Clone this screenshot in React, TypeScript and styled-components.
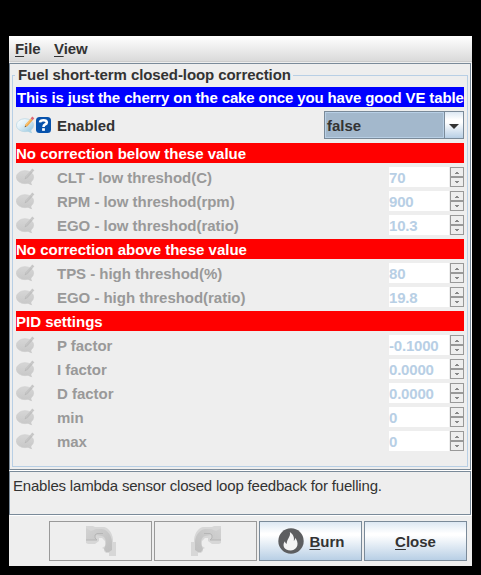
import React from "react";
import styled, { createGlobalStyle } from "styled-components";

const Global = createGlobalStyle`
  html, body { margin: 0; background: #000; }
  * { box-sizing: border-box; }
  body { font: bold 15px/20px "Liberation Sans", Arial, sans-serif; color: #333; overflow: hidden; }
`;

const Desktop = styled.div`
  height: 575px;
  width: 481px;
  padding: 36px 9px 9px;
  background: #000;
`;

const Window = styled.main`
  width: 463px;
  height: 530px;
  background: #eee;
  display: flex;
  flex-direction: column;
`;

const MenuBar = styled.nav`
  height: 27px;
  flex: none;
  display: flex;
  gap: 13px;
  padding: 3px 6px 0;
  background: linear-gradient(#fff, #dadada 25px, #ccc 25px, #ccc 26px, #eee 26px);
`;

const Word = styled.span<{ $width: number }>`
  display: block;
  width: ${(p) => p.$width}px;
  white-space: pre;
  letter-spacing: -0.1px;
`;

const Key = styled.span`
  text-decoration: underline;
  text-decoration-thickness: 1px;
  text-underline-offset: 2px;
  text-decoration-skip-ink: none;
`;

const Pane = styled.section<{ $height: number }>`
  height: ${(p) => p.$height}px;
  flex: none;
  width: 462px;
  border: 1px solid #7a8a99;
  box-shadow: 1px 1px 0 #fff;
`;

const Group = styled.fieldset`
  margin: 1px 5px 0 2px;
  padding: 0 5px 0 3px;
  width: 456px;
  height: 402px;
  border: 1px solid #b8cfe5;
  min-width: 0;
  display: block;
`;

const Legend = styled.legend`
  height: 20px;
  margin-left: -1px;
  padding: 0 2px 0 3px;
  white-space: nowrap;
  letter-spacing: -0.08px;
`;

const Rows = styled.div`
  display: grid;
  grid-template-columns: 448px;
  gap: 4px;
  padding-top: 2px;
`;

const Banner = styled.div<{ $info?: boolean }>`
  height: 20px;
  line-height: 21px;
  white-space: nowrap;
  background: ${(p) => (p.$info ? "#00f" : "#f00")};
  padding-left: ${(p) => (p.$info ? 1 : 0)}px;
  letter-spacing: ${(p) => (p.$info ? -0.12 : 0)}px;
  color: #fff;
`;

const Row = styled.div<{ $off?: boolean }>`
  display: grid;
  grid-template-columns: 41px 1fr auto;
  grid-template-rows: 100%;
  align-items: center;
  height: ${(p) => (p.$off ? 20 : 28)}px;
  color: ${(p) => (p.$off ? "#999" : "#333")};
  white-space: nowrap;
`;

const Label = styled.span`
  height: 20px;
  line-height: 22px;
  letter-spacing: -0.03px;
`;

const Icons = styled.div`
  display: flex;
  gap: 1px;
  align-items: center;
`;

const Combo = styled.div`
  width: 140px;
  height: 28px;
  display: grid;
  grid-template-columns: 1fr 19px;
  grid-template-rows: 26px;
  border: 1px solid #7a8a99;
`;

const ComboValue = styled.div`
  background: #a3b8cc;
  border: 1px solid #b8cfe5;
  padding-left: 1px;
  line-height: 25px;
`;

const ComboArrow = styled.div`
  border-left: 1px solid #7a8a99;
  display: flex;
  align-items: center;
  justify-content: center;
  padding-top: 2px;
  background: linear-gradient(#dde8f3, #fff 30%, #fff 40%, #b8cfe5);
`;

const Spinner = styled.div`
  width: 75px;
  height: 20px;
  display: grid;
  grid-template-columns: 60px 14px;
  column-gap: 1px;
`;

const Value = styled.div`
  height: 20px;
  background: #fff;
  color: #b8cfe5;
  line-height: 22px;
  letter-spacing: -0.2px;
`;

const Steps = styled.div`
  display: grid;
  grid-template-rows: 10px 10px;
`;

const Step = styled.div`
  border: 1px solid #999;
  display: flex;
  align-items: center;
  justify-content: center;
`;

const Hint = styled.p`
  margin: 0;
  padding: 4px 3px;
  font-weight: normal;
  letter-spacing: -0.19px;
  white-space: nowrap;
`;

const Actions = styled.footer`
  display: grid;
  grid-template-columns: repeat(4, 103px);
  gap: 2px;
  padding: 6px 0 0 40px;
`;

const Action = styled.button<{ $off?: boolean }>`
  height: 40px;
  padding: 0;
  font: inherit;
  color: #333;
  display: flex;
  align-items: center;
  justify-content: center;
  gap: 5px;
  border: 1px solid ${(p) => (p.$off ? "#999" : "#7a8a99")};
  background: ${(p) => (p.$off ? "#eee" : "linear-gradient(#dde8f3, #fff 30%, #fff 35%, #b8cfe5)")};
`;

const Caption = styled.span`
  padding-top: 2px;
`;

const Flame = styled.svg`
  margin-left: 2px;
`;

const Divider = styled.div`
  height: 1px;
`;

const NoteIcon = ({ off }: { off?: boolean }) => (
  <svg width="19" height="18" viewBox="0 0 19 18">
    <defs>
      <linearGradient id="bubble" x1="0" y1="0" x2="1" y2="1">
        <stop offset="0" stopColor="#fff" />
        <stop offset="0.4" stopColor="#e3f1f8" />
        <stop offset="1" stopColor="#8fc4de" />
      </linearGradient>
      <linearGradient id="bubbleOff" x1="0" y1="0" x2="0" y2="1">
        <stop offset="0" stopColor="#d6d6d6" />
        <stop offset="1" stopColor="#c8c8c8" />
      </linearGradient>
    </defs>
    <path d="M10 14.500c2 .3 3.500 2.500 6.300 2.800-1-1.200-1.300-2.500-.8-4.300z" fill={off ? "#cacaca" : "#a9d3e6"} />
    <ellipse
      cx="9"
      cy="9.200"
      rx="8.600"
      ry="6.500"
      fill={off ? "url(#bubbleOff)" : "url(#bubble)"}
      stroke={off ? "#cecece" : "#b5d4e2"}
      strokeWidth=".7"
    />
    <path d="M8.700 11.300l.7-2.700 5.300-6 2 1.600-5.300 6z" fill={off ? "#c0c0c0" : "#f2ac50"} />
    <path d="M10 8.900l5-5.700" stroke={off ? "#cacaca" : "#ffd58a"} strokeWidth=".8" />
    <path d="M14.700 2.600L16.200.600l2.100 1.600-1.600 2z" fill={off ? "#c6c6c6" : "#df6673"} />
    <path d="M8.700 11.300l.4-1.600 1.200 1z" fill={off ? "#b8b8b8" : "#555"} />
  </svg>
);

const HelpIcon = () => (
  <svg width="15" height="16" viewBox="0 0 15 16">
    <rect width="15" height="16" rx="3.500" fill="#0752ac" />
    <path d="M4 5.400Q4.300 3.200 7.500 3.200t3.300 2.200Q10.800 6.700 9 7.500 7.500 8.200 7.500 10" fill="none" stroke="#fff" strokeWidth="2.600" />
    <rect x="6.100" y="11.200" width="2.800" height="2.600" fill="#fff" />
  </svg>
);

const StepIcon = ({ down }: { down?: boolean }) => (
  <svg width="4" height="3" viewBox="0 0 4 3" shapeRendering="crispEdges">
    <path d={down ? "M0 0h4v1H3v1H1V1H0z" : "M1 1h2v1h1v1H0V2h1z"} fill="#888" />
  </svg>
);

const TurnIcon = ({ redo }: { redo?: boolean }) => (
  <svg width="30" height="30" viewBox="0 0 30 30">
    <defs>
      <linearGradient id="turn" x1="0" y1="0" x2="1" y2="1">
        <stop offset="0" stopColor="#d2d2d2" />
        <stop offset="0.6" stopColor="#c6c6c6" />
        <stop offset="1" stopColor="#bebebe" />
      </linearGradient>
    </defs>
    <g transform={redo ? "translate(30) scale(-1 1)" : undefined}>
      <path d="M0 0h7l2 1h9c5 1 8 6 9 12v3h3v14h-7v-3h-3l-2-2v-2l-2-1 3-2v-5l-3-3h-3v3l-4 3H2l-2-1z" fill="#d7d7d7" />
      <path d="M0 2l5 3 5-2h6c6 1 9 6 10 12v9l-3 2h-3l-2-3 2-5c0-4-1-7-4-8l-6-1-1 2 2 3H0z" fill="url(#turn)" />
      <path d="M0 14h11l-2-2V9l2-1.500h6" stroke="#b6b6b6" fill="none" />
    </g>
  </svg>
);

const FlameIcon = () => (
  <Flame width="26" height="26" viewBox="0 0 26 26">
    <circle cx="13" cy="13" r="12.700" fill="#5d5e60" />
    <path
      d="M11.800 4c3.700 2.500 4.700 5.500 4 9 1-.7 1.400-1.800 1.200-3.200 4.200 4.200 3.500 12.200-4.200 12.700C5.500 22.500 4 16.500 7 13.200c.1 1.400.7 2.200 1.800 2.500C8.400 11.500 13.200 8.500 11.800 4z"
      fill="#f4f4f4"
    />
  </Flame>
);

type Entry = { label: string; value: string };

const Field = ({ label, value }: Entry) => (
  <Row $off>
    <Icons><NoteIcon off /></Icons>
    <Label>{label}</Label>
    <Spinner>
      <Value>{value}</Value>
      <Steps>
        <Step><StepIcon /></Step>
        <Step><StepIcon down /></Step>
      </Steps>
    </Spinner>
  </Row>
);

const sections: { title: string; fields: Entry[] }[] = [
  {
    title: "No correction below these value",
    fields: [
      { label: "CLT - low threshod(C)", value: "70" },
      { label: "RPM - low threshod(rpm)", value: "900" },
      { label: "EGO - low threshod(ratio)", value: "10.3" },
    ],
  },
  {
    title: "No correction above these value",
    fields: [
      { label: "TPS - high threshod(%)", value: "80" },
      { label: "EGO - high threshod(ratio)", value: "19.8" },
    ],
  },
  {
    title: "PID settings",
    fields: [
      { label: "P factor", value: "-0.1000" },
      { label: "I factor", value: "0.0000" },
      { label: "D factor", value: "0.0000" },
      { label: "min", value: "0" },
      { label: "max", value: "0" },
    ],
  },
];

export default function App() {
  return (
    <Desktop>
      <Global />
      <Window>
        <MenuBar>
          <Word $width={26}><Key>F</Key>ile</Word>
          <Word $width={34}><Key>V</Key>iew</Word>
        </MenuBar>
        <Pane $height={407}>
          <Group>
            <Legend>Fuel short-term closed-loop correction</Legend>
            <Rows>
              <Banner $info>This is just the cherry on the cake once you have good VE table</Banner>
              <Row>
                <Icons><NoteIcon /><HelpIcon /></Icons>
                <Label>Enabled</Label>
                <Combo>
                  <ComboValue>false</ComboValue>
                  <ComboArrow>
                    <svg width="10" height="5" viewBox="0 0 10 5"><path d="M0 0h10L5 5z" fill="#333" /></svg>
                  </ComboArrow>
                </Combo>
              </Row>
              {sections.map((s) => (
                <React.Fragment key={s.title}>
                  <Banner>{s.title}</Banner>
                  {s.fields.map((f) => <Field key={f.label} {...f} />)}
                </React.Fragment>
              ))}
            </Rows>
          </Group>
        </Pane>
        <Divider />
        <Pane $height={44}>
          <Hint>Enables lambda sensor closed loop feedback for fuelling.</Hint>
        </Pane>
        <Actions>
          <Action $off aria-label="Undo"><TurnIcon /></Action>
          <Action $off aria-label="Redo"><TurnIcon redo /></Action>
          <Action><FlameIcon /><Caption><Key>B</Key>urn</Caption></Action>
          <Action><Caption><Key>C</Key>lose</Caption></Action>
        </Actions>
      </Window>
    </Desktop>
  );
}
